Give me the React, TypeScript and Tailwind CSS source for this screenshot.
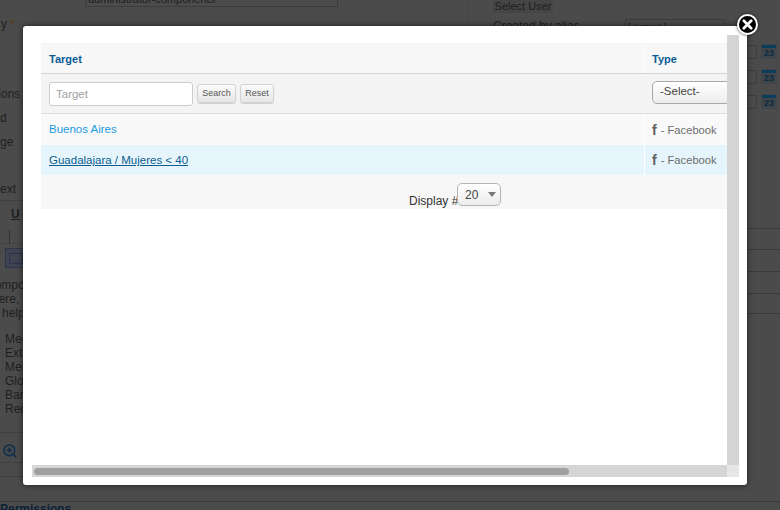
import React from "react";
import { ZoomIn } from "lucide-react";

const font = "font-['Liberation_Sans',Arial,sans-serif]";

const CalendarIcon = () => (
  <div className="flex items-center gap-[4px]">
    <div className="h-[14px] w-[10px] border border-l-0 border-[#3e3e3e]" />
    <div className="flex h-[15px] w-[16px] flex-col items-center bg-[#3f4548]">
      <div className="mt-[1px] h-[3px] w-[14px] bg-[#0c3d5b]" />
      <span className="text-[9px] leading-[10px] font-bold text-[#0b2c44]">23</span>
    </div>
  </div>
);

const LeftStrip = () => {
  const list = ["Media", "Extensions", "Menus", "Global", "Banners", "Redirect"];
  return (
    <div className="flex w-[23px] shrink-0 flex-col overflow-hidden text-[12px] leading-[14px] text-[#1f1f1f]">
      <div className="mt-[17px] ml-[1px] h-[14px] whitespace-nowrap">
        y <span className="text-[#5a3c10]">*</span>
      </div>
      <div className="mt-[56px] h-[14px] -ml-[21px] whitespace-nowrap">Options</div>
      <div className="mt-[10px] h-[14px] whitespace-nowrap">d</div>
      <div className="mt-[10px] h-[14px] whitespace-nowrap">ge</div>
      <div className="mt-[33px] h-[14px] whitespace-nowrap">ext</div>
      <div className="mt-[4px] border-t border-[#3f3f3f] pt-[6px] pl-[11px] font-bold underline">U</div>
      <div className="mt-[9px] flex h-[14px] items-center gap-[6px] border-b border-[#444]">
        <span className="h-[14px] w-[3px]" />
        <span className="h-[14px] w-px bg-[#333]" />
      </div>
      <div className="mt-[4px] ml-[5px] flex h-[20px] w-[24px] items-center border border-[#2b3550] bg-[#3f4450] pl-[3px]">
        <div className="h-[11px] w-[14px] border border-[#27354f]" />
      </div>
      <div className="mt-[10px] -ml-[14px] whitespace-nowrap">Component</div>
      <div className="-ml-[8px] whitespace-nowrap">here, a</div>
      <div className="ml-[2px] whitespace-nowrap">help</div>
      <div className="mt-[12px] ml-[5px] flex flex-col">
        {list.map((item) => (
          <span key={item} className="whitespace-nowrap">
            {item}
          </span>
        ))}
      </div>
      <div className="mt-[16px] h-[31px] border-y border-[#3f3f3f] pt-[10px] pl-[2px]">
        <ZoomIn className="h-[16px] w-[16px] text-[#12304a]" strokeWidth={2.5} />
      </div>
      <div className="mt-[13px] h-px bg-[#3f3f3f]" />
    </div>
  );
};

const RightStrip = () => (
  <div className="flex w-[33px] shrink-0 flex-col overflow-hidden">
    <div className="mt-[44px] flex flex-col gap-[10px]">
      <CalendarIcon />
      <CalendarIcon />
      <CalendarIcon />
    </div>
    <div className="mt-[98px] flex flex-col">
      <div className="h-[22px] border-b border-[#3a3a3a]" />
      <div className="h-[21px] border-b border-[#3a3a3a]" />
      <div className="h-[22px] border-b border-[#3a3a3a]" />
      <div className="h-[22px] border-b border-[#3a3a3a]" />
      <div className="h-[20px] border-b border-[#3a3a3a]" />
    </div>
  </div>
);

const Backdrop = () => (
  <div className="flex h-full w-full">
    <LeftStrip />
    <div className="flex flex-1 flex-col justify-between overflow-hidden text-[12px] text-[#1f1f1f]">
      <div className="flex h-[26px] overflow-hidden">
        <div className="-mt-[8px] ml-[62px] h-[15px] w-[253px] border border-[#3c3c3c] pl-[2px] text-[11px] leading-[13px] whitespace-nowrap">
          administrator-components
        </div>
        <div className="ml-[130px] h-[26px] w-px bg-[#444]" />
        <div className="ml-[24px] flex flex-col">
          <div className="flex h-[13px] w-[60px] items-end justify-center rounded-[3px] bg-[#454545] text-[11px] leading-[13px]">
            Select User
          </div>
          <div className="mt-[6px] flex whitespace-nowrap">
            <span className="w-[132px] leading-[14px]">Created by alias</span>
            <span className="w-[100px] border border-[#3c3c3c] pl-[2px] text-[9px] leading-[14px]">[ current ]</span>
          </div>
        </div>
      </div>
      <div className="h-[25px]" />
    </div>
    <RightStrip />
  </div>
);

const rowText = "text-[11.5px] leading-[14px]";

const FacebookCell = () => (
  <div className="flex items-center pl-[7px] whitespace-nowrap">
    <span className="mr-[4px] text-[14px] leading-[14px] font-bold text-[#5f5f5f]">f</span>
    <span className="text-[11.2px] leading-[14px] text-[#6d6d6d]">- Facebook</span>
  </div>
);

const ResultsTable = () => (
  <div className="flex w-[720px] flex-col">
    <div className="flex h-[31px] items-center border-b border-[#d4d4d4] bg-[#f7f7f7] pt-[3px] text-[11px] font-bold text-[#0b5c94]">
      <div className="w-[603px] pl-[8px]">Target</div>
      <div className="h-full w-px bg-white" />
      <div className="pl-[7px]">Type</div>
    </div>
    <div className="flex h-[40px] items-center border-b border-[#dedede] bg-[#f4f4f4]">
      <div className="flex w-[603px] items-center pl-[8px]">
        <div className={`flex h-[24px] w-[144px] items-center rounded-[3px] border border-[#cccccc] bg-white pt-[1px] pl-[6px] ${rowText} text-[#a2a2a2]`}>
          Target
        </div>
        <button className="ml-[4px] h-[19px] w-[39px] rounded-[3px] border border-[#d2d2d2] bg-gradient-to-b from-[#fbfbfb] to-[#e6e6e6] text-[9px] text-[#555] shadow-[0_1px_1px_rgba(0,0,0,0.15)]">
          Search
        </button>
        <button className="ml-[4px] h-[19px] w-[34px] rounded-[3px] border border-[#d2d2d2] bg-gradient-to-b from-[#fbfbfb] to-[#e6e6e6] text-[9px] text-[#555] shadow-[0_1px_1px_rgba(0,0,0,0.15)]">
          Reset
        </button>
      </div>
      <div className="h-full w-px bg-[#f4f4f4]" />
      <div className="pl-[7px]">
        <div className="-mt-[3px] flex h-[23px] w-[90px] items-center rounded-[5px] border border-[#a8a8a8] bg-gradient-to-b from-[#ffffff] to-[#ececec] pl-[7px] text-[11.5px] text-[#444]">
          -Select-
        </div>
      </div>
    </div>
    <div className="flex h-[31px] items-center bg-[#f9f9f9]">
      <div className={`w-[603px] pb-[1px] pl-[8px] ${rowText} text-[#1b9bdf]`}>Buenos Aires</div>
      <div className="h-full w-px bg-white" />
      <FacebookCell />
    </div>
    <div className="flex h-[30px] items-center bg-[#e6f5fc]">
      <div className={`w-[603px] pl-[8px] ${rowText} text-[#0b5c8f] underline`}>Guadalajara / Mujeres &lt; 40</div>
      <div className="h-full w-px bg-white" />
      <FacebookCell />
    </div>
    <div className="flex h-[34px] items-start bg-[#f7f7f7] pt-[8px] pl-[368px]">
      <span className="mt-[11px] w-[48px] text-[12px] leading-[14px] whitespace-nowrap text-[#333]">Display #</span>
      <div className="flex h-[23px] w-[44px] items-center justify-between rounded-[5px] border border-[#b5b5b5] bg-gradient-to-b from-[#ffffff] to-[#ececec] pr-[4px] pl-[7px] text-[12px] text-[#444]">
        20
        <svg viewBox="0 0 8 5" className="h-[5px] w-[8px]">
          <path d="M0 0h8L4 5z" fill="#777" />
        </svg>
      </div>
    </div>
  </div>
);

const Modal = () => (
  <div className="absolute top-[26px] left-[23px] h-[459px] w-[724px] rounded-[3px] bg-white p-[9px] shadow-[0_0_6px_rgba(0,0,0,0.6)]">
    <div className="flex h-[442px] w-[707px] flex-col">
      <div className="flex h-[430px]">
        <div className="h-full w-[695px] overflow-hidden pt-[8px] pl-[9px]">
          <ResultsTable />
        </div>
        <div className="h-full w-[12px] bg-[#d5d5d5]" />
      </div>
      <div className="flex h-[12px]">
        <div className="flex h-full w-[695px] items-center bg-[#d5d5d5] px-[2px]">
          <div className="h-[7px] w-[535px] rounded-full bg-[#a0a0a0]" />
        </div>
        <div className="h-full w-[12px] bg-[#e6e6e6]" />
      </div>
    </div>
  </div>
);

const CloseButton = () => (
  <button className="absolute top-[14px] left-[737px] flex h-[21px] w-[21px] items-center justify-center rounded-full border-2 border-white bg-black shadow-[0_0_3px_rgba(0,0,0,0.8)]">
    <svg viewBox="0 0 12 12" className="h-[11px] w-[11px]">
      <path d="M2 2l8 8M10 2l-8 8" stroke="#fff" strokeWidth="3" strokeLinecap="round" />
    </svg>
  </button>
);

export default function App() {
  return (
    <div className={`relative h-[510px] w-[780px] overflow-hidden bg-[#4b4b4b] ${font}`}>
      <Backdrop />
      <div className="absolute bottom-0 left-0 h-[9px] w-full overflow-hidden border-t border-[#3c3c3c]">
        <span className="block text-[12px] leading-[14px] font-bold text-[#0a2236]">Permissions</span>
      </div>
      <Modal />
      <CloseButton />
    </div>
  );
}
